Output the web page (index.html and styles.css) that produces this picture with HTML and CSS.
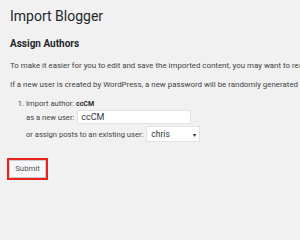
FILE: index.html
```html
<!DOCTYPE html>
<html>
<head>
<meta charset="utf-8">
<link rel="stylesheet" href="styles.css">
</head>
<body>
<div class="wrap">
  <h1 class="title">Import Blogger</h1>
  <h2 class="subtitle">Assign Authors</h2>
  <p class="note">To make it easier for you to edit and save the imported content, you may want to reassign the author of the imported item to an existing user of this site.</p>
  <p class="note">If a new user is created by WordPress, a new password will be randomly generated and the new user's role will be set as subscriber.</p>
  <ol class="authors">
    <li class="author">
      <div class="author-line">Import author: <b class="author-name">ccCM</b></div>
      <div class="field-row">
        <span class="label">as a new user:</span>
        <span class="text-input">ccCM</span>
      </div>
      <div class="field-row">
        <span class="label">or assign posts to an existing user:</span>
        <span class="select"><span class="select-value">chris</span><span class="select-arrow">&#9662;</span></span>
      </div>
    </li>
  </ol>
  <div class="submit-area">
    <span class="highlight"><span class="button">Submit</span></span>
  </div>
</div>
</body>
</html>
```
FILE: styles.css
```css
html, body {
  margin: 0;
  padding: 0;
  overflow: hidden;
  background: #f1f1f1;
}
body {
  font-family: Roboto, "Liberation Sans", sans-serif;
  color: #444;
}
.wrap {
  padding: 8px 0 0 10px;
}
.title {
  margin: 0;
  font-size: 14px;
  line-height: 16px;
  font-weight: 400;
  color: #23282d;
}
.subtitle {
  margin: 14px 0 11px;
  font-size: 10px;
  line-height: 12px;
  font-weight: 700;
  color: #23282d;
}
.note {
  margin: 10px 0;
  font-size: 7.9px;
  line-height: 9px;
  white-space: nowrap;
  overflow: hidden;
}
.authors {
  margin: 10px 0 0;
  padding: 0 0 0 16px;
  font-size: 7.6px;
  line-height: 9px;
}
.author-name {
  font-size: 7px;
  color: #23282d;
}
.field-row {
  display: flex;
  align-items: center;
  gap: 3px;
  margin-top: 1px;
}
.field-row + .field-row {
  margin-top: 2px;
}
.text-input {
  box-sizing: border-box;
  width: 114px;
  height: 14px;
  padding-left: 3px;
  background: #fff;
  border: 1px solid #e2e2e2;
  font-size: 9px;
  line-height: 12px;
  color: #32373c;
}
.select {
  box-sizing: border-box;
  width: 54px;
  height: 16px;
  padding: 0 3px 0 4px;
  background: #fff;
  border: 1px solid #e2e2e2;
  display: flex;
  align-items: center;
  justify-content: space-between;
  font-size: 8.5px;
  color: #32373c;
}
.select-arrow {
  font-size: 6px;
  color: #222;
}
.submit-area {
  margin-top: 14px;
  margin-left: -3px;
}
.highlight {
  display: inline-block;
  border: 2.5px solid #e8231f;
}
.button {
  display: block;
  box-sizing: border-box;
  width: 37px;
  height: 18px;
  background: #f7f7fa;
  border: 1px solid #ccc;
  text-align: center;
  font-size: 7.8px;
  line-height: 16px;
  color: #555;
}
```
